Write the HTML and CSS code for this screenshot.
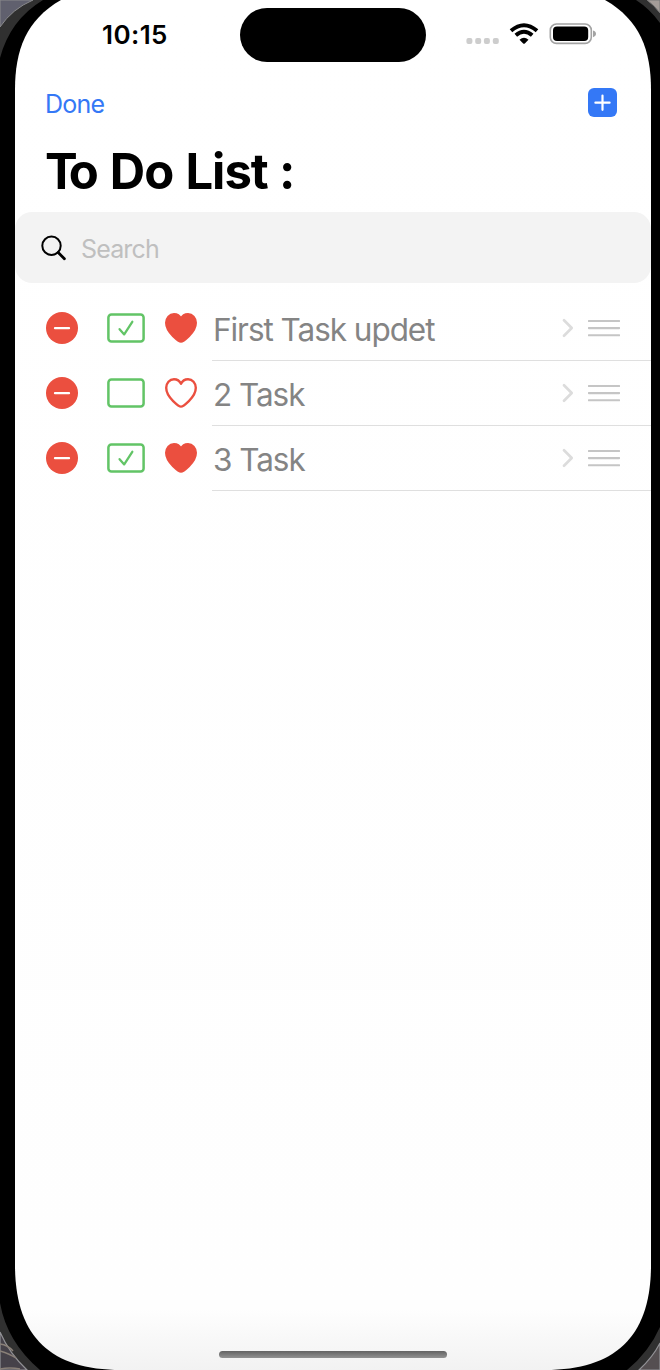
FILE: index.html
```html
<!DOCTYPE html>
<html lang="en">
<head>
<meta charset="utf-8">
<title>To Do List</title>
<link rel="stylesheet" href="styles.css">
</head>
<body>
<svg class="symbols" aria-hidden="true">
  <symbol id="minus" viewBox="0 0 32 32"><circle cx="16" cy="16" r="16" fill="#eb4f3f"/><path d="M9 16.2H23" stroke="#fff" stroke-width="2.3" stroke-linecap="round"/></symbol>
  <symbol id="box" viewBox="0 0 38 30"><rect x="1.4" y="1.5" width="35.2" height="27" rx="3" fill="none" stroke="#62c466" stroke-width="2.5"/></symbol>
  <symbol id="boxcheck" viewBox="0 0 38 30"><use href="#box"/><path d="M12.6 16.2L17.2 21.4L25.3 8.8" fill="none" stroke="#62c466" stroke-width="2.3" stroke-linecap="round" stroke-linejoin="round"/></symbol>
  <symbol id="heartshape" viewBox="0 0 32 30"><path d="M16 28.6C14.8 28.6 1.2 20 1.2 9.8C1.2 5 4.6 1.2 9 1.2C12.3 1.2 14.7 3 16 5.8C17.3 3 19.7 1.2 23 1.2C27.4 1.2 30.8 5 30.8 9.8C30.8 20 17.2 28.6 16 28.6Z" stroke="#eb4f3f" stroke-width="2.4" stroke-linejoin="round"/></symbol>
  <symbol id="chevron" viewBox="0 0 12 20"><path d="M2 2.2L9.7 10L2 17.8" fill="none" stroke="#dcdcdc" stroke-width="2.7" stroke-linecap="round" stroke-linejoin="round"/></symbol>
  <symbol id="grip" viewBox="0 0 32 20"><path d="M.8 3H31.2M.8 10.1H31.2M.8 17.3H31.2" stroke="#c5c5c5" stroke-width="2.1" stroke-linecap="round"/></symbol>
</svg>
<div class="phone">
  <svg class="frame" viewBox="0 0 660 1370" aria-hidden="true">
    <defs><linearGradient id="shade" x1="0" y1="0" x2="0" y2="1"><stop offset="0" stop-color="#fff"/><stop offset=".955" stop-color="#fefefe"/><stop offset="1" stop-color="#f2f2f2"/></linearGradient></defs>
    <rect width="660" height="1370" fill="#000"/>
    <path d="M0 0H43Q10 20 0 58Z" fill="#303030"/>
    <path d="M0 0H33Q12 9 0 27Z" fill="#60606e" stroke="#8a8a8c" stroke-width="1"/>
    <path d="M636 0Q650 9 660 23V0Z" fill="#303030"/>
    <path d="M647 0Q654 5 660 13V0Z" fill="#a49c98" stroke="#777" stroke-width="1"/>
    <path d="M0 1303Q7 1342 40 1370H0Z" fill="#303030"/>
    <path d="M0 1332Q9 1353 27 1370H0Z" fill="#454149" stroke="#929296" stroke-width="1.2"/>
    <path d="M0 1344Q8 1345 13 1351M0 1351Q10 1354 16 1358M0 1369Q10 1367 20 1369" fill="none" stroke="#8a8078" stroke-width="1.5"/>
    <path d="M660 1327Q649 1352 627 1370H660Z" fill="#303030"/>
    <path d="M660 1343Q653 1357 639 1370H660Z" fill="#554f51" stroke="#929296" stroke-width="1.2"/>
    <path d="M15 90C15 50 26 20 61 0H605C640 20 651 50 651 90V1265C651 1335 617 1370 545 1370H121C49 1370 15 1335 15 1265Z" fill="url(#shade)"/>
  </svg>
  <main class="screen">
    <header class="status">
      <span class="time">10:15</span>
      <span class="island"></span>
      <svg class="signals" width="132" height="24" viewBox="0 0 132 24">
        <g fill="#cdcdcd"><rect x="1.4" y="15" width="6" height="6" rx="2"/><rect x="10.2" y="15" width="6" height="6" rx="2"/><rect x="18.9" y="15" width="6" height="6" rx="2"/><rect x="27.8" y="15" width="6" height="6" rx="2"/></g>
        <path d="M46 7.7Q59 -3.4 72 7.7" fill="none" stroke="#000" stroke-width="3.9"/>
        <path d="M50.8 12.3Q59 5.1 67.2 12.3" fill="none" stroke="#000" stroke-width="3.9"/>
        <path d="M54.5 16.7Q59 13 63.5 16.7L59.8 20.4Q59 21 58.2 20.4Z"/>
        <rect x="85.3" y="1" width="41" height="19.4" rx="6.2" fill="#fff" stroke="#a3a3a3" stroke-width="1.6"/>
        <rect x="88" y="3.5" width="35.2" height="14.4" rx="4"/>
        <path d="M128 7.4Q131 8.3 131 10.8T128 14.2Z" fill="#a3a3a3"/>
      </svg>
    </header>
    <nav class="toolbar">
      <span class="done">Done</span>
      <svg class="add" width="29" height="29" viewBox="0 0 29 29"><rect width="29" height="29" rx="6" fill="#3478f6"/><path d="M14.5 7.6V21.8M7.4 14.7H21.6" stroke="#fff" stroke-width="2.2" stroke-linecap="round"/></svg>
    </nav>
    <h1 class="title"><span class="kern">T</span>o Do List<span class="tight"> </span>:</h1>
    <div class="search">
      <svg width="26" height="26" viewBox="0 0 26 26"><circle cx="10.5" cy="10.8" r="9.2" fill="none" stroke="#000" stroke-width="2"/><path d="M17.2 17.5L23.4 23.8" stroke="#000" stroke-width="2.8" stroke-linecap="round"/></svg>
      <span class="hint">Search</span>
    </div>
    <section class="list">
      <div class="row">
        <svg class="minus"><use href="#minus"/></svg><svg class="box"><use href="#boxcheck"/></svg><svg class="heart full"><use href="#heartshape"/></svg>
        <div class="cell"><span class="task">First Task updet</span><svg class="chevron"><use href="#chevron"/></svg><svg class="grip"><use href="#grip"/></svg></div>
      </div>
      <div class="row">
        <svg class="minus"><use href="#minus"/></svg><svg class="box"><use href="#box"/></svg><svg class="heart"><use href="#heartshape"/></svg>
        <div class="cell"><span class="task">2 Task</span><svg class="chevron"><use href="#chevron"/></svg><svg class="grip"><use href="#grip"/></svg></div>
      </div>
      <div class="row">
        <svg class="minus"><use href="#minus"/></svg><svg class="box"><use href="#boxcheck"/></svg><svg class="heart full"><use href="#heartshape"/></svg>
        <div class="cell"><span class="task">3 Task</span><svg class="chevron"><use href="#chevron"/></svg><svg class="grip"><use href="#grip"/></svg></div>
      </div>
    </section>
    <div class="home"></div>
  </main>
</div>
</body>
</html>
```
FILE: styles.css
```css
* { box-sizing: border-box; }
body { margin: 0; font-family: Inter, "Liberation Sans", sans-serif; color: #000; }
svg { display: block; flex: none; }
.symbols { position: absolute; width: 0; height: 0; }
.phone { position: relative; width: 660px; height: 1370px; overflow: hidden; }
.frame { position: absolute; inset: 0; width: 660px; height: 1370px; }
.screen { position: relative; width: 636px; height: 1370px; margin-left: 15px; display: flex; flex-direction: column; }
.status { height: 70px; padding-left: 87px; display: flex; align-items: flex-start; }
.time { width: 138px; margin-top: 19px; font-size: 26px; line-height: 32px; font-weight: 600; letter-spacing: 0.4px; }
.island { width: 186px; height: 54px; margin-top: 8px; border-radius: 27px; background: #000; }
.signals { margin: 23px 0 0 39px; }
.toolbar { height: 66px; padding: 0 34px 0 30px; display: flex; align-items: center; justify-content: space-between; }
.done { padding-top: 2px; color: #3478f6; font-size: 25px; letter-spacing: -0.75px; }
.add { margin-bottom: 1px; }
.title { margin: 0; height: 76px; padding-left: 30px; font-size: 49px; line-height: 72px; font-weight: 700; letter-spacing: -1px; word-spacing: 1.5px; white-space: nowrap; }
.kern { letter-spacing: -9px; }
.tight { letter-spacing: -2px; }
.search { height: 71px; padding-left: 26px; border-radius: 17px; background: #f3f3f3; display: flex; align-items: center; gap: 14px; }
.hint { padding-top: 2px; font-size: 25px; color: #bfbfbf; letter-spacing: -0.85px; }
.list { padding-top: 13px; flex: 1; }
.row { height: 65px; padding-left: 31px; display: flex; align-items: center; }
.minus { width: 32px; height: 32px; margin-bottom: 1px; }
.box { width: 38px; height: 30px; margin: 0 0 1px 29px; }
.heart { width: 32px; height: 30px; margin: 0 0 1px 20px; fill: none; }
.heart.full { fill: #eb4f3f; }
.cell { flex: 1; height: 65px; margin-left: 15px; padding-right: 31px; display: flex; align-items: center; border-bottom: 1px solid #dfdfdf; }
.task { flex: 1; padding: 2px 0 0 1px; font-size: 31.5px; color: #848484; letter-spacing: -1.05px; white-space: nowrap; }
.chevron { width: 12px; height: 20px; }
.grip { width: 32px; height: 20px; margin-left: 14px; }
.home { width: 228px; height: 7px; margin: 0 auto 12px 204px; border-radius: 4px; background: linear-gradient(#646464, #929292); }
```
